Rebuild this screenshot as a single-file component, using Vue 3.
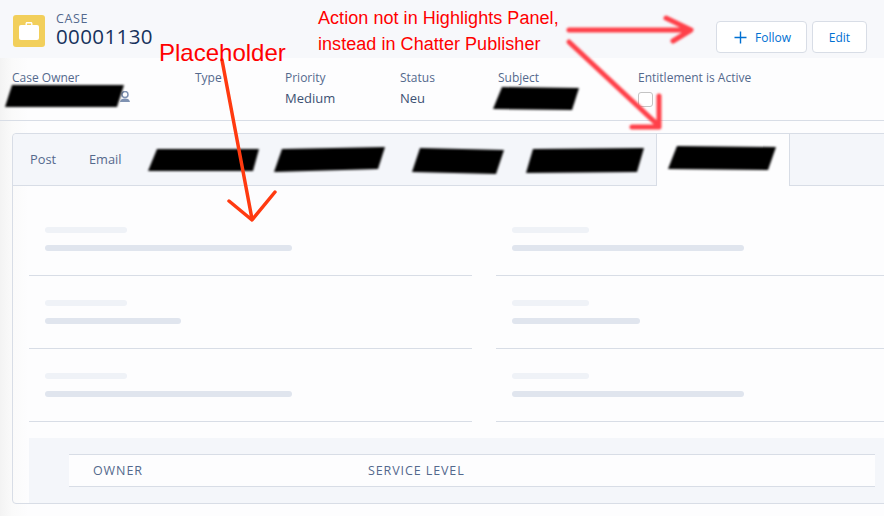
<script setup>
const fields = [
  { label: 'Case Owner', value: '', cls: 'w-owner' },
  { label: 'Type', value: '', cls: 'w-type' },
  { label: 'Priority', value: 'Medium', cls: 'w-priority' },
  { label: 'Status', value: 'Neu', cls: 'w-status' },
  { label: 'Subject', value: '', cls: 'w-subject' }
]
const skeletonRows = [
  { left: 'long', right: 'long-r' },
  { left: 'mid', right: 'mid-r' },
  { left: 'long', right: 'long-r' }
]
const redactions = [
  '12,85 124,85 117,107 5,107',
  '502,87 579,88 572,110 493,109',
  '157,149 259,149 253,171 148,171',
  '282,149 385,147 378,169 274,172',
  '420,148 504,150 496,174 412,172',
  '533,149 644,148 637,172 526,173',
  '677,146 776,147 768,170 668,169'
]
</script>

<template>
  <div class="page">
    <header class="head">
      <div class="case-icon">
        <svg width="20" height="18" viewBox="0 0 20 18">
          <path d="M6.500 3V1.500C6.500.7 7.200 0 8 0h4c.8 0 1.500.7 1.500 1.500V3h-1.400V1.700c0-.2-.1-.3-.3-.3H8.200c-.2 0-.3.100-.3.300V3z" fill="#fff" />
          <rect x="0" y="3" width="20" height="15" rx="2" fill="#fff" />
        </svg>
      </div>
      <div class="title">
        <div class="eyebrow">CASE</div>
        <div class="number">00001130</div>
      </div>
      <div class="actions">
        <button class="btn btn-follow">
          <svg width="13" height="13" viewBox="0 0 13 13"><path d="M6.500 0.500v12M0.500 6.500h12" stroke="#0070d2" stroke-width="1.400" fill="none" /></svg>
          <span>Follow</span>
        </button>
        <button class="btn btn-edit">Edit</button>
      </div>
    </header>

    <section class="details">
      <div v-for="f in fields" :key="f.label" class="field" :class="f.cls">
        <div class="f-label">{{ f.label }}</div>
        <div class="f-value">
          {{ f.value }}
          <svg v-if="f.label === 'Case Owner'" class="owner-icon" width="10" height="12" viewBox="0 0 10 12">
            <circle cx="5" cy="3.500" r="3" fill="none" stroke="#7f92b2" stroke-width="1.500" />
            <path d="M0 11c.5-2.500 2-3.500 5-3.500s4.500 1 5 3.500z" fill="#7f92b2" />
          </svg>
        </div>
      </div>
      <div class="field w-ent">
        <div class="f-label">Entitlement is Active</div>
        <div class="check"></div>
      </div>
    </section>

    <section class="card">
      <nav class="tabs">
        <div class="tab t-post">Post</div>
        <div class="tab t-email">Email</div>
        <div class="tab t-blank"></div>
        <div class="tab t-blank"></div>
        <div class="tab t-blank"></div>
        <div class="tab t-blank"></div>
        <div class="tab t-active"></div>
        <div class="tab-rest"></div>
      </nav>
      <div class="form">
        <div v-for="(r, i) in skeletonRows" :key="i" class="form-row">
          <div class="cell">
            <div class="bar bar-label"></div>
            <div class="bar bar-value" :class="r.left"></div>
          </div>
          <div class="cell">
            <div class="bar bar-label short"></div>
            <div class="bar bar-value" :class="r.right"></div>
          </div>
        </div>
      </div>
      <div class="foot">
        <div class="foot-table">
          <div class="th th-owner">OWNER</div>
          <div class="th">SERVICE LEVEL</div>
        </div>
      </div>
    </section>

    <svg class="marks" width="884" height="516" viewBox="0 0 884 516">
      <defs>
        <filter id="soft" x="-10%" y="-30%" width="120%" height="160%"><feGaussianBlur stdDeviation="1" /></filter>
        <filter id="softer" x="-10%" y="-20%" width="120%" height="140%"><feGaussianBlur stdDeviation="1.100" /></filter>
      </defs>
      <polygon v-for="p in redactions" :key="p" :points="p" fill="#000" filter="url(#soft)" />
      <g fill="none" stroke="#ff4048" stroke-width="5" stroke-linecap="round" stroke-linejoin="round" filter="url(#softer)">
        <path d="M569 30H690M666 18L691 30L673 41" />
        <path d="M569 42L659 126M659 96V127H632" />
      </g>
      <g fill="none" stroke="#ff3a10" stroke-width="3.500" stroke-linecap="round" stroke-linejoin="round">
        <path d="M222 60L252 219M229 201L252 220L275 192" />
      </g>
    </svg>
    <div class="note note-placeholder">Placeholder</div>
    <div class="note note-action">Action not in Highlights Panel,<br />instead in Chatter Publisher</div>
  </div>
</template>

<style>
html, body { margin: 0; padding: 0; background: #fdfdfe; }
</style>

<style scoped>
.page {
  position: relative;
  width: 884px;
  height: 516px;
  overflow: hidden;
  font-family: "Open Sans", "Liberation Sans", sans-serif;
  color: #16325c;
  background: linear-gradient(90deg, #f3f3f3 0, #fafafa 12px, #fdfdfe 28px);
}
.head {
  display: flex;
  align-items: flex-start;
  height: 58px;
  background: #f7f8fb;
  box-sizing: border-box;
  padding: 10px 17px 0 13px;
}
.case-icon {
  width: 32px;
  height: 32px;
  margin-top: 5px;
  border-radius: 3px;
  background: #f2cf5b;
  display: flex;
  align-items: center;
  justify-content: center;
}
.title { margin-left: 11px; }
.eyebrow { font-size: 12.500px; line-height: 18px; color: #54698d; letter-spacing: 0.600px; }
.number { font-size: 20.500px; line-height: 16px; color: #16325c; letter-spacing: 0.400px; }
.actions { margin-left: auto; margin-top: 11px; display: flex; gap: 5px; }
.btn {
  height: 32px;
  box-sizing: border-box;
  border: 1px solid #d8dde6;
  border-radius: 4px;
  background: #fff;
  color: #0070d2;
  font-family: inherit;
  font-size: 12px;
  padding: 0;
  display: flex;
  align-items: center;
  justify-content: center;
}
.btn-follow { width: 91px; gap: 8px; padding-left: 2px; }
.btn-edit { width: 55px; }

.details {
  display: flex;
  height: 63px;
  box-sizing: border-box;
  border-bottom: 1px solid #d8dde6;
  padding: 12px 0 0 12px;
}
.w-owner { width: 183px; }
.w-type { width: 90px; }
.w-priority { width: 115px; }
.w-status { width: 98px; }
.w-subject { width: 140px; }
.f-label { font-size: 12px; line-height: 16px; color: #54698d; }
.f-value { position: relative; font-size: 13px; line-height: 18px; margin-top: 3px; color: #3c5073; }
.owner-icon { position: absolute; left: 108px; top: 2px; }
.check {
  width: 15px;
  height: 15px;
  box-sizing: border-box;
  border: 1px solid #c4c4c4;
  border-radius: 3px;
  background: #fff;
  margin-top: 6px;
}

.card {
  box-sizing: border-box;
  height: 371px;
  margin: 12px -20px 0 12px;
  border: 1px solid #d8dde6;
  border-radius: 4px;
  display: flex;
  flex-direction: column;
}
.tabs { display: flex; height: 52px; flex: none; }
.tab {
  box-sizing: border-box;
  height: 52px;
  background: #f4f6fa;
  border-bottom: 1px solid #d8dde6;
  font-size: 12.800px;
  color: #54698d;
  display: flex;
  align-items: center;
  padding-bottom: 2px;
}
.t-post { width: 59px; padding-left: 17px; border-top-left-radius: 4px; }
.t-email { width: 67px; padding-left: 17px; }
.t-blank { width: 129.250px; }
.t-active {
  width: 134px;
  background: #fdfdfe;
  border-bottom: none;
  border-left: 1px solid #d8dde6;
  border-right: 1px solid #d8dde6;
}
.tab-rest { flex: 1; background: #f4f6fa; border-bottom: 1px solid #d8dde6; height: 52px; box-sizing: border-box; }
.form { padding: 17px 0 0 16px; }
.form-row {
  display: grid;
  grid-template-columns: 443px 1fr;
  column-gap: 24px;
}
.cell {
  box-sizing: border-box;
  height: 73px;
  padding: 24px 0 0 16px;
  border-bottom: 1px solid #d8dde6;
}
.bar { height: 6px; border-radius: 3px; }
.bar-label { width: 82px; background: #eff2f7; }
.bar-label.short { width: 77px; }
.bar-value { margin-top: 12px; background: #e0e5ee; }
.long { width: 247px; }
.mid { width: 136px; }
.long-r { width: 232px; }
.mid-r { width: 128px; }

.foot {
  flex: 1;
  margin: 16px 0 0 16px;
  background: #f4f6fa;
  padding-top: 16px;
}
.foot-table {
  width: 806px;
  height: 33px;
  box-sizing: border-box;
  margin-left: 40px;
  background: #fdfdfe;
  border-top: 1px solid #d8dde6;
  border-bottom: 1px solid #d8dde6;
  display: flex;
  align-items: center;
  padding-left: 24px;
}
.th { font-size: 12.500px; letter-spacing: 0.900px; color: #54698d; }
.th-owner { width: 275px; }

.marks { position: absolute; left: 0; top: 0; pointer-events: none; }
.note {
  position: absolute;
  color: #ff0000;
  font-family: "Liberation Sans", Arial, sans-serif;
  white-space: nowrap;
  letter-spacing: 0.050px;
}
.note-placeholder { left: 159px; top: 39px; font-size: 24px; line-height: 28px; letter-spacing: 0; }
.note-action { left: 318px; top: 5px; font-size: 18px; line-height: 26px; }
</style>
